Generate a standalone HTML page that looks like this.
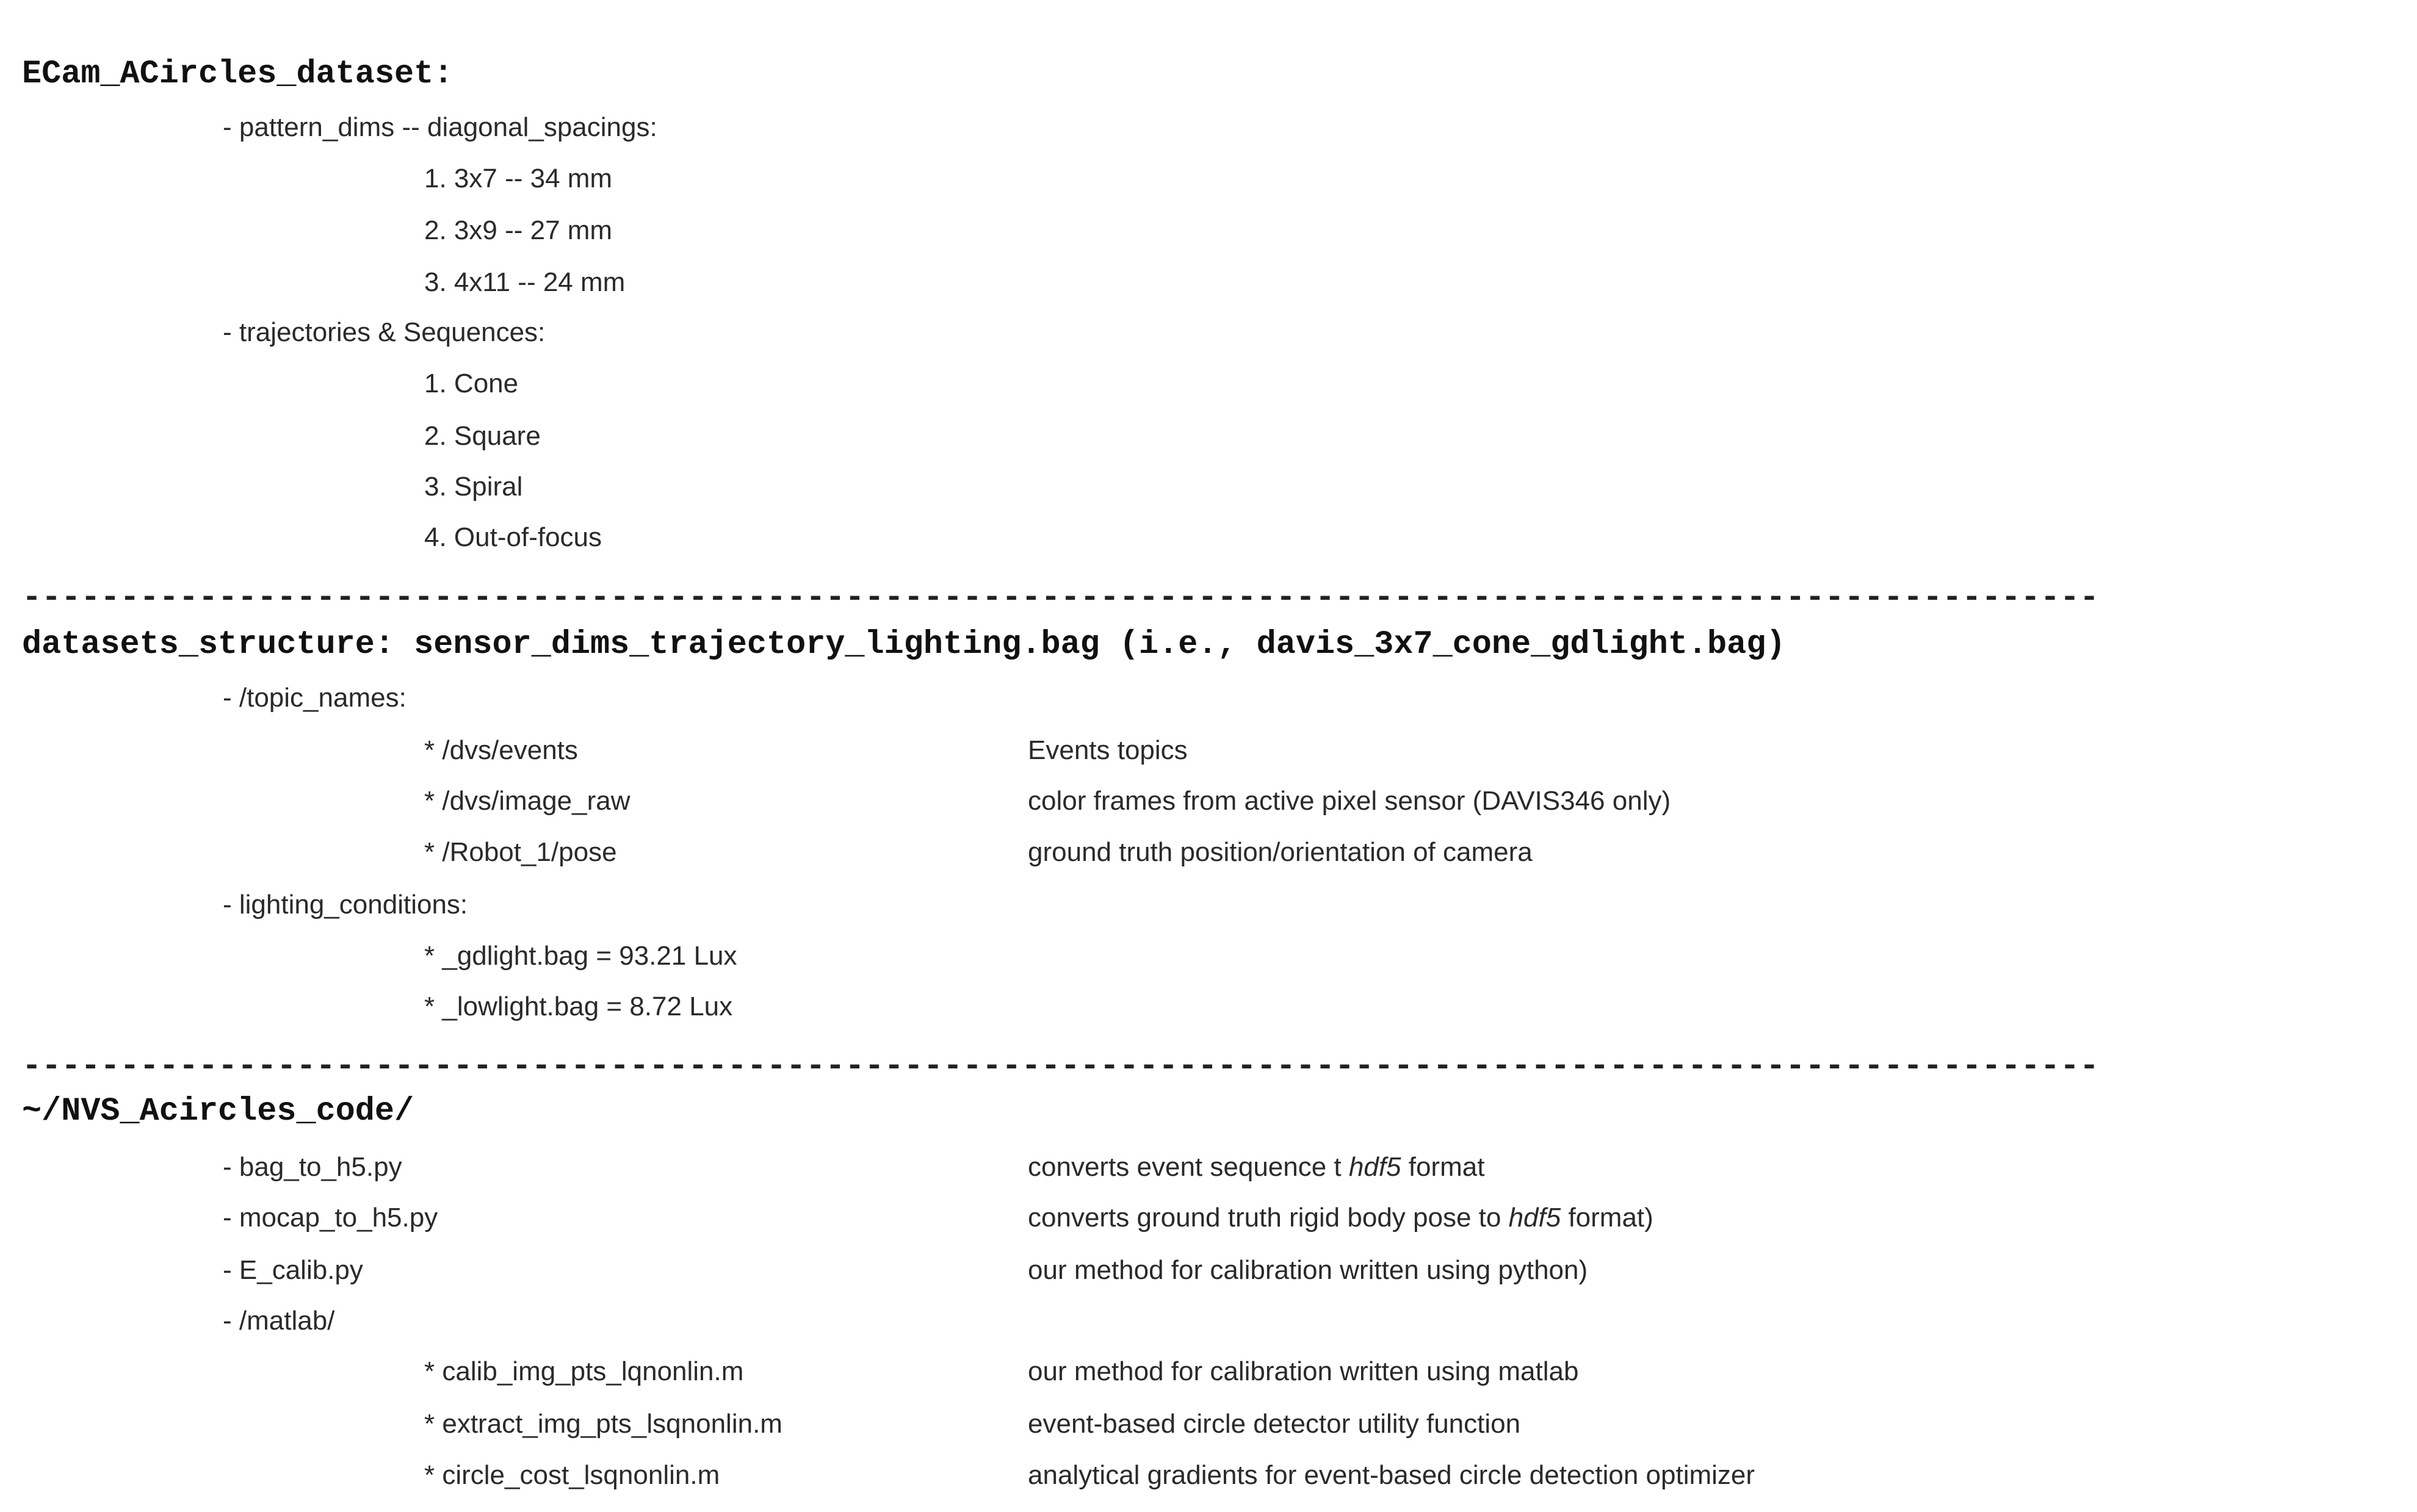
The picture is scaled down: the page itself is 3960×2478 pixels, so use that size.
<!DOCTYPE html>
<html><head><meta charset="utf-8"><style>
html,body{margin:0;padding:0;background:#fff;width:3960px;height:2478px;overflow:hidden;position:relative}
.b{position:absolute;font-family:"Liberation Sans","DejaVu Sans",sans-serif;font-size:44px;line-height:44px;color:#2a2a2a;white-space:pre}
.h{position:absolute;left:36px;font-family:"Liberation Mono","DejaVu Sans Mono",monospace;font-weight:bold;font-size:53.5px;line-height:54px;color:#111;white-space:pre}
.d{position:absolute;left:36px;font-family:"Liberation Mono",monospace;font-weight:bold;font-size:53.5px;line-height:54px;color:#222;white-space:pre}
.i1{left:365px}.i2{left:695px}.c2{left:1684px}
</style></head><body>
<div class="h" style="top:95px">ECam_ACircles_dataset:</div>
<div class="b i1" style="top:187px">- pattern_dims -- diagonal_spacings:</div>
<div class="b i2" style="top:271px">1. 3x7 -- 34 mm</div>
<div class="b i2" style="top:356px">2. 3x9 -- 27 mm</div>
<div class="b i2" style="top:441px">3. 4x11 -- 24 mm</div>
<div class="b i1" style="top:523px">- trajectories &amp; Sequences:</div>
<div class="b i2" style="top:607px">1. Cone</div>
<div class="b i2" style="top:693px">2. Square</div>
<div class="b i2" style="top:776px">3. Spiral</div>
<div class="b i2" style="top:859px">4. Out-of-focus</div>
<div class="d" style="top:954px">----------------------------------------------------------------------------------------------------------</div>
<div class="h" style="top:1030px">datasets_structure: sensor_dims_trajectory_lighting.bag (i.e., davis_3x7_cone_gdlight.bag)</div>
<div class="b i1" style="top:1122px">- /topic_names:</div>
<div class="b i2" style="top:1208px">* /dvs/events</div><div class="b c2" style="top:1208px">Events topics</div>
<div class="b i2" style="top:1291px">* /dvs/image_raw</div><div class="b c2" style="top:1291px">color frames from active pixel sensor (DAVIS346 only)</div>
<div class="b i2" style="top:1375px">* /Robot_1/pose</div><div class="b c2" style="top:1375px">ground truth position/orientation of camera</div>
<div class="b i1" style="top:1461px">- lighting_conditions:</div>
<div class="b i2" style="top:1545px">* _gdlight.bag = 93.21 Lux</div>
<div class="b i2" style="top:1628px">* _lowlight.bag = 8.72 Lux</div>
<div class="d" style="top:1722px">----------------------------------------------------------------------------------------------------------</div>
<div class="h" style="top:1795px">~/NVS_Acircles_code/</div>
<div class="b i1" style="top:1891px">- bag_to_h5.py</div><div class="b c2" style="top:1891px">converts event sequence t <i>hdf5</i> format</div>
<div class="b i1" style="top:1974px">- mocap_to_h5.py</div><div class="b c2" style="top:1974px">converts ground truth rigid body pose to <i>hdf5</i> format)</div>
<div class="b i1" style="top:2060px">- E_calib.py</div><div class="b c2" style="top:2060px">our method for calibration written using python)</div>
<div class="b i1" style="top:2143px">- /matlab/</div>
<div class="b i2" style="top:2226px">* calib_img_pts_lqnonlin.m</div><div class="b c2" style="top:2226px">our method for calibration written using matlab</div>
<div class="b i2" style="top:2312px">* extract_img_pts_lsqnonlin.m</div><div class="b c2" style="top:2312px">event-based circle detector utility function</div>
<div class="b i2" style="top:2396px">* circle_cost_lsqnonlin.m</div><div class="b c2" style="top:2396px">analytical gradients for event-based circle detection optimizer</div>
</body></html>
